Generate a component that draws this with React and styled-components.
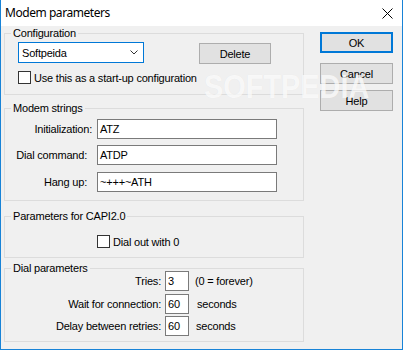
import React from "react";
import styled, { createGlobalStyle, css } from "styled-components";

const Global = createGlobalStyle`
  html, body {
    margin: 0;
    padding: 0;
    background: #fff;
  }
  body {
    font-family: "Liberation Sans", Arial, sans-serif;
    font-size: 11px;
    letter-spacing: -0.2px;
    color: #000;
  }
`;

const Window = styled.div`
  position: relative;
  width: 403px;
  height: 350px;
  box-sizing: border-box;
  border: 1px solid #1883d7;
  border-top: none;
  background: #f0f0f0;
  overflow: hidden;
  display: flex;
  flex-direction: column;
`;

const TitleBar = styled.div`
  height: 26px;
  flex-shrink: 0;
  background: #fff;
  display: flex;
  align-items: center;
  justify-content: space-between;
  padding: 0 9px 0 4px;
`;

const Title = styled.span`
  font-family: "Noto Sans", "Open Sans", sans-serif;
  font-size: 12px;
  letter-spacing: -0.45px;
  line-height: 16px;
`;

const Body = styled.div`
  display: flex;
  padding-left: 3px;
`;

const LeftCol = styled.div`
  width: 300px;
  padding-top: 7px;
  display: flex;
  flex-direction: column;
`;

const RightCol = styled.div`
  width: 73px;
  margin-left: 16px;
  padding-top: 6px;
  display: flex;
  flex-direction: column;
`;

const Button = styled.button`
  box-sizing: border-box;
  width: ${(p) => p.$w || 73}px;
  height: 21px;
  margin: ${(p) => p.$mt || 0}px 0 0 ${(p) => p.$ml || 0}px;
  padding: 0;
  background: #e1e1e1;
  border: 1px solid #adadad;
  font-family: "Liberation Sans", Arial, sans-serif;
  font-size: 11px;
  letter-spacing: -0.2px;
  color: #000;
  ${(p) =>
    p.$default &&
    css`
      border: 2px solid #0078d7;
    `}
`;

const Group = styled.div`
  position: relative;
  box-sizing: border-box;
  border: 1px solid #dcdcdc;
  height: ${(p) => p.$h}px;
  margin-top: ${(p) => p.$mt || 0}px;
  padding: ${(p) => p.$pad};
`;

const GroupTitle = styled.span`
  position: absolute;
  top: -7px;
  left: 6px;
  padding: 0 2px;
  background: #f0f0f0;
  line-height: 13px;
  white-space: nowrap;
`;

const Row = styled.div`
  display: flex;
  align-items: center;
  margin-top: ${(p) => p.$mt || 0}px;
`;

const Combo = styled.div`
  box-sizing: border-box;
  width: 126px;
  height: 21px;
  border: 1px solid #0078d7;
  background: #fff;
  display: flex;
  align-items: center;
  justify-content: space-between;
  padding: 0 5px 0 3px;
  align-self: flex-start;
`;

const CheckBox = styled.span`
  box-sizing: border-box;
  width: 13px;
  height: 13px;
  border: 1px solid #333;
  background: #fff;
  flex-shrink: 0;
`;

const CheckLabel = styled.span`
  margin-left: 3px;
  white-space: nowrap;
`;

const FieldLabel = styled.span`
  width: ${(p) => p.$w}px;
  margin-right: ${(p) => p.$gap}px;
  text-align: right;
  white-space: nowrap;
  flex-shrink: 0;
`;

const TextField = styled.div`
  box-sizing: border-box;
  width: ${(p) => p.$w}px;
  height: 20px;
  border: 1px solid #7a7a7a;
  background: #fff;
  padding-left: 2px;
  line-height: 18px;
  white-space: nowrap;
`;

const Suffix = styled.span`
  margin-left: ${(p) => p.$ml}px;
  white-space: nowrap;
`;

const Watermark = styled.div`
  position: absolute;
  left: 203px;
  top: 69px;
  font-family: "Liberation Sans", Arial, sans-serif;
  font-weight: bold;
  font-size: 34px;
  line-height: 34px;
  letter-spacing: 0;
  color: rgba(255, 255, 255, 0.75);
  text-shadow: 0 0 1px rgba(0, 0, 0, 0.06);
  transform: scaleX(0.85);
  transform-origin: left top;
  pointer-events: none;
`;

const CloseIcon = () => (
  <svg width="11" height="11" viewBox="0 0 11 11">
    <path d="M0.5 0.5 L10.5 10.5 M10.5 0.5 L0.5 10.5" stroke="#000" strokeWidth="1" fill="none" />
  </svg>
);

const Chevron = () => (
  <svg width="8" height="5" viewBox="0 0 8 5">
    <path d="M0.5 0.5 L4 4 L7.5 0.5" stroke="#333" strokeWidth="1" fill="none" />
  </svg>
);

const modemRows = [
  { label: "Initialization:", value: "ATZ", end: 92, mt: 0 },
  { label: "Dial command:", value: "ATDP", end: 87, mt: 6 },
  { label: "Hang up:", value: "~+++~ATH", end: 87, mt: 7 },
];

const dialRows = [
  { label: "Tries:", value: "3", suffix: "(0 = forever)", sml: 6, mt: 0 },
  { label: "Wait for connection:", value: "60", suffix: "seconds", sml: 8, mt: 3 },
  { label: "Delay between retries:", value: "60", suffix: "seconds", sml: 7, mt: 2 },
];

export default function App() {
  return (
    <Window>
      <Global />
      <TitleBar>
        <Title>Modem parameters</Title>
        <CloseIcon />
      </TitleBar>
      <Body>
        <LeftCol>
          <Group $h={62} $pad="8px 0 0 13px">
            <GroupTitle>Configuration</GroupTitle>
            <Row>
              <Combo>
                <span>Softpeida</span>
                <Chevron />
              </Combo>
              <Button $w={72} $ml={55} $mt={1}>
                Delete
              </Button>
            </Row>
            <Row $mt={7}>
              <CheckBox />
              <CheckLabel>Use this as a start-up configuration</CheckLabel>
            </Row>
          </Group>

          <Group $h={93} $mt={13} $pad="10px 0 0 0">
            <GroupTitle>Modem strings</GroupTitle>
            {modemRows.map((r) => (
              <Row key={r.label} $mt={r.mt}>
                <FieldLabel $w={r.end - 5} $gap={97 - r.end}>
                  {r.label}
                </FieldLabel>
                <TextField $w={180}>{r.value}</TextField>
              </Row>
            ))}
          </Group>

          <Group $h={42} $mt={15} $pad="18px 0 0 92px">
            <GroupTitle>Parameters for CAPI2.0</GroupTitle>
            <Row>
              <CheckBox />
              <CheckLabel>Dial out with 0</CheckLabel>
            </Row>
          </Group>

          <Group $h={74} $mt={10} $pad="2px 0 0 0">
            <GroupTitle>Dial parameters</GroupTitle>
            {dialRows.map((r) => (
              <Row key={r.label} $mt={r.mt}>
                <FieldLabel $w={156} $gap={4}>
                  {r.label}
                </FieldLabel>
                <TextField $w={24}>{r.value}</TextField>
                <Suffix $ml={r.sml}>{r.suffix}</Suffix>
              </Row>
            ))}
          </Group>
        </LeftCol>

        <RightCol>
          <Button $default>OK</Button>
          <Button $mt={10}>Cancel</Button>
          <Button $mt={6}>Help</Button>
        </RightCol>
      </Body>
      <Watermark>SOFTPEDIA</Watermark>
    </Window>
  );
}
